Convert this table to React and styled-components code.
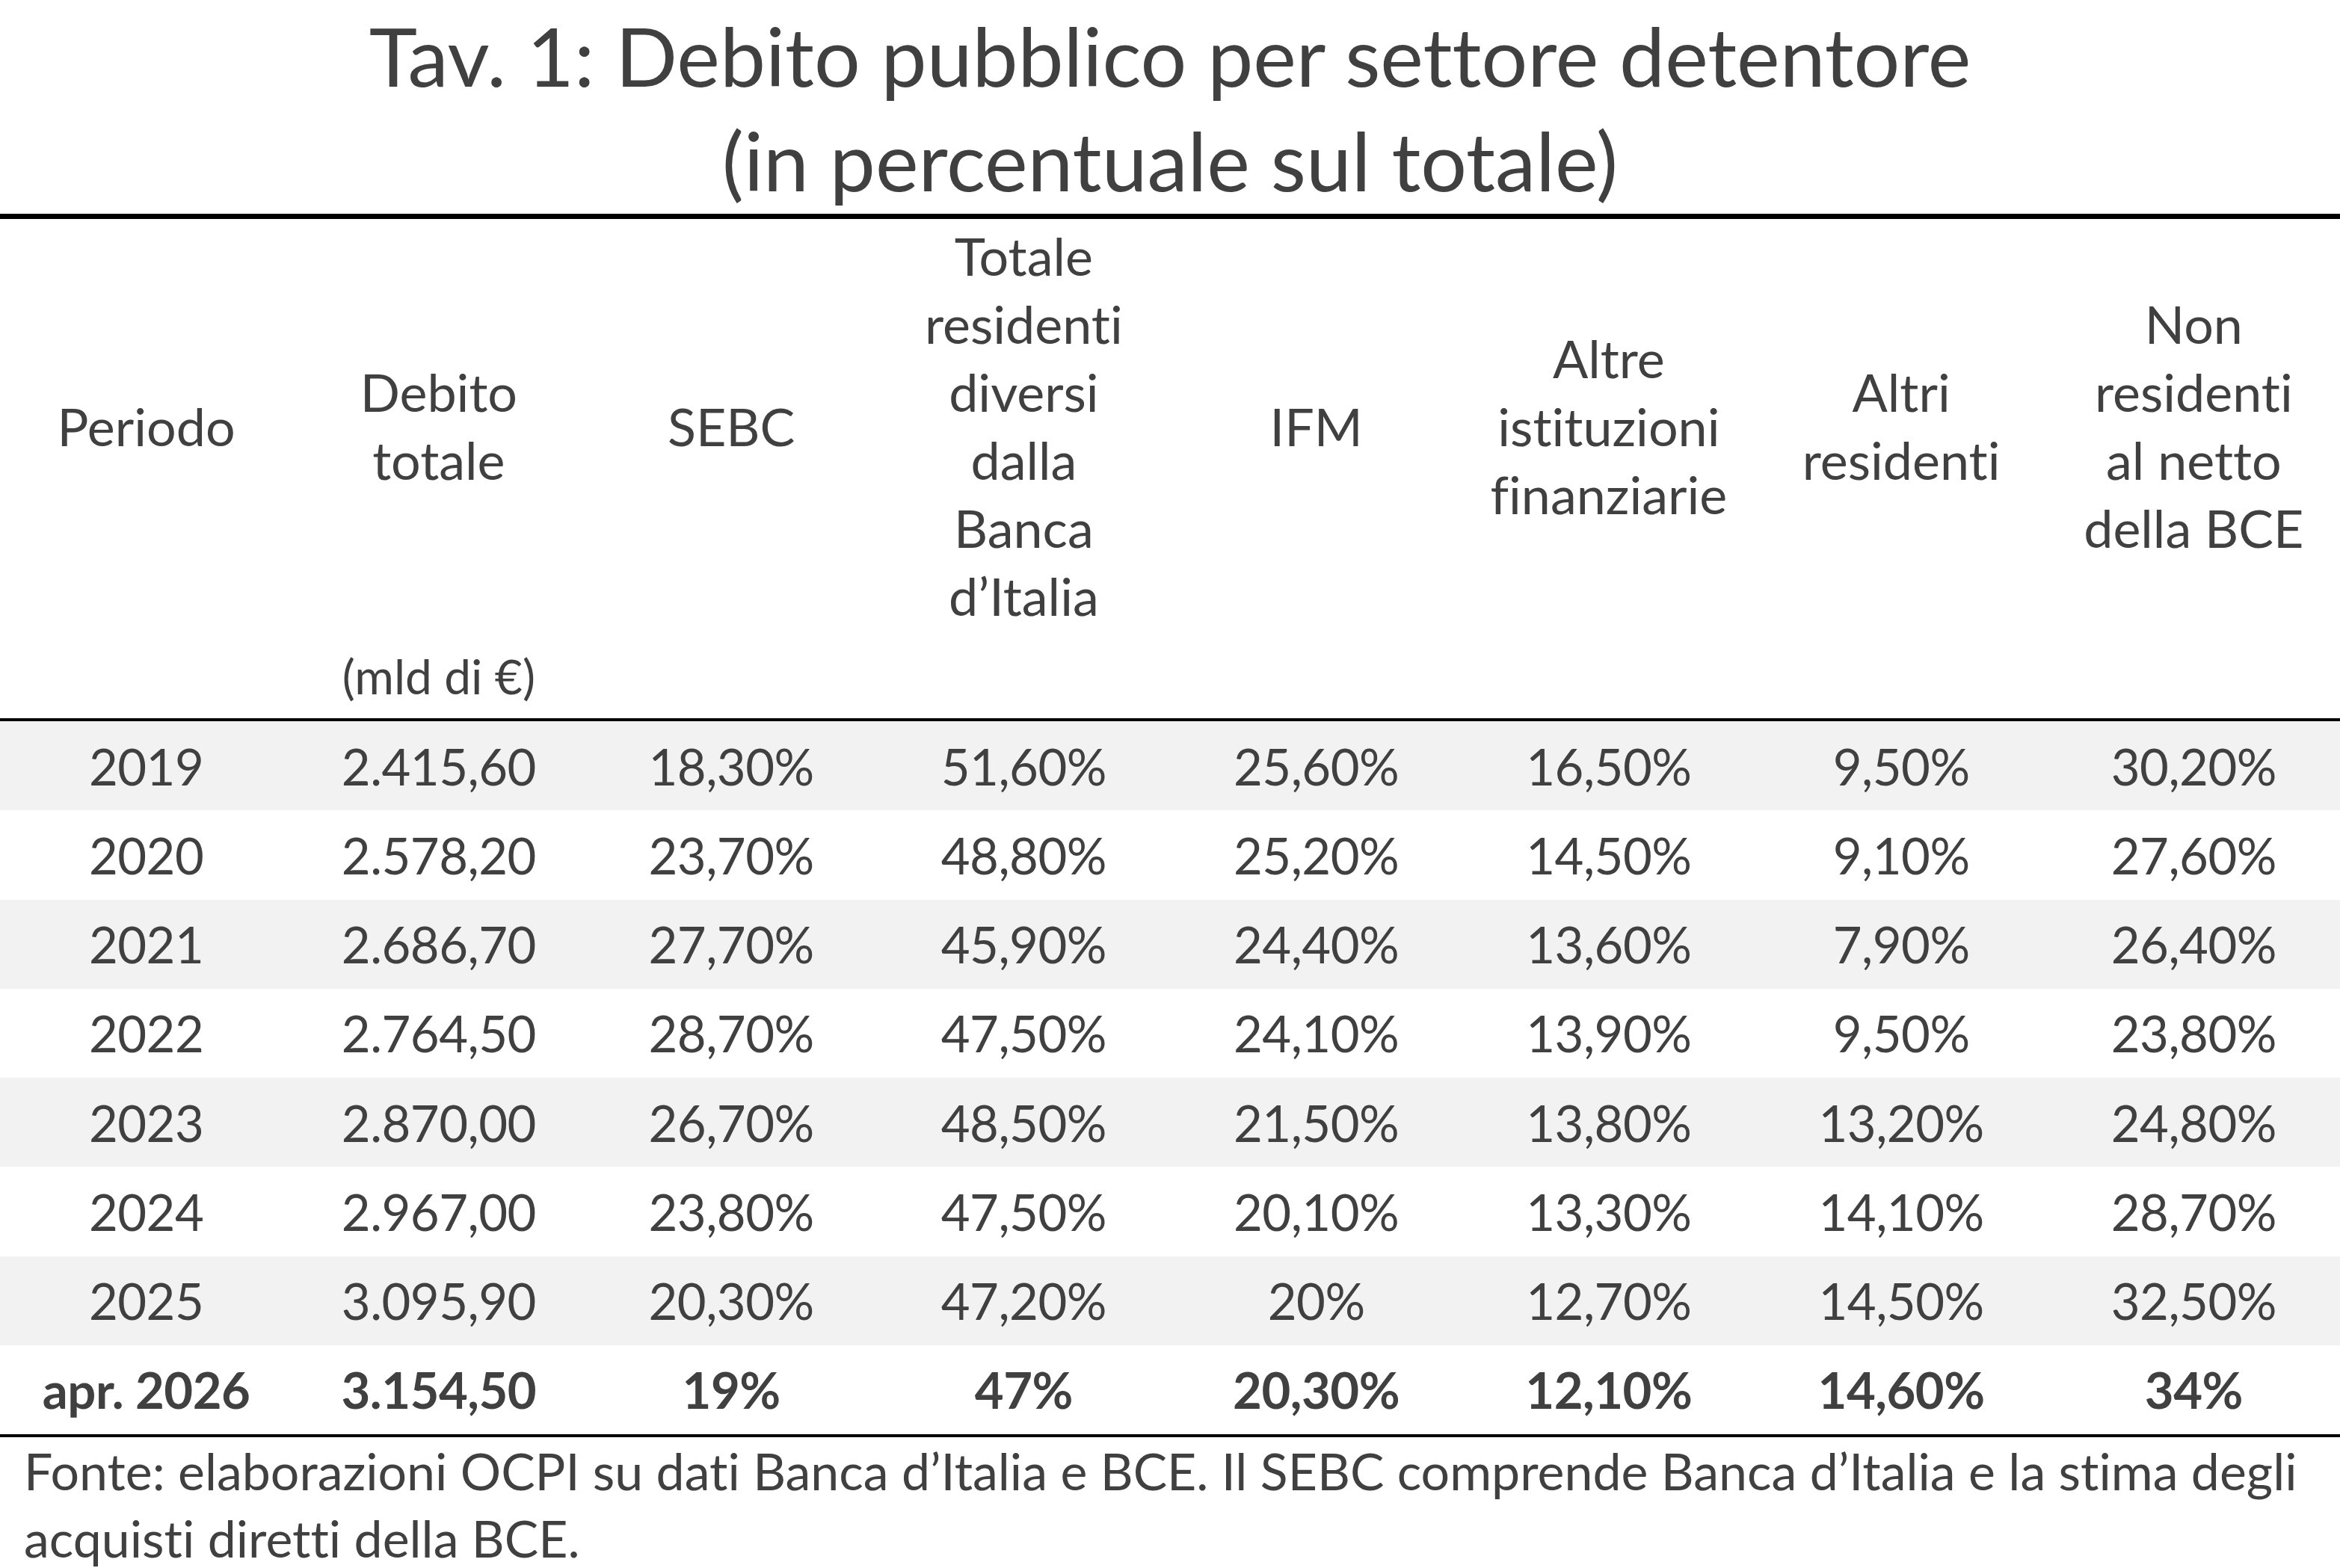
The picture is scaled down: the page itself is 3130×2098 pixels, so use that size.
import React from "react";
import styled, { createGlobalStyle } from "styled-components";

const Global = createGlobalStyle`
  html, body { margin: 0; padding: 0; background: #ffffff; }
  * { box-sizing: border-box; }
`;

const Page = styled.div`
  width: 3130px;
  background: #ffffff;
  color: #404040;
  font-family: Lato, "Open Sans", "Liberation Sans", sans-serif;
  font-variant-ligatures: none;
  font-feature-settings: "liga" 0, "clig" 0, "dlig" 0;
`;

const Title = styled.h1`
  margin: 0;
  height: 286px;
  padding-top: 4px;
  text-align: center;
  font-weight: 400;
  font-size: 109px;
  line-height: 140px;
`;

const Table = styled.section`
  border-top: 7px solid #000;
  border-bottom: 4px solid #000;
`;

const Head = styled.div`
  display: grid;
  grid-template-columns: repeat(8, 1fr);
  grid-template-rows: 554px 114px;
  border-bottom: 4px solid #000;
  font-size: 70px;
  line-height: 91px;
`;

const HeadCell = styled.div`
  display: flex;
  align-items: center;
  justify-content: center;
  text-align: center;
`;

const UnitCell = styled.div`
  display: flex;
  align-items: center;
  justify-content: center;
  font-size: 64px;
`;

const Row = styled.div`
  display: grid;
  grid-template-columns: repeat(8, 1fr);
  height: 119.25px;
  background: ${(p) => (p.$shaded ? "#f2f2f2" : "#ffffff")};
  font-weight: ${(p) => (p.$bold ? 700 : 400)};
  font-size: 67px;
  letter-spacing: -0.5px;
`;

const Cell = styled.div`
  display: flex;
  align-items: center;
  justify-content: center;
  white-space: nowrap;
`;

const Note = styled.p`
  margin: 0;
  padding: 0 20px 0 32px;
  font-size: 68px;
  line-height: 90px;
`;

const headers = [
  ["Periodo"],
  ["Debito", "totale"],
  ["SEBC"],
  ["Totale", "residenti", "diversi", "dalla", "Banca", "d\u2019Italia"],
  ["IFM"],
  ["Altre", "istituzioni", "finanziarie"],
  ["Altri", "residenti"],
  ["Non", "residenti", "al netto", "della BCE"],
];

const rows = [
  ["2019", "2.415,60", "18,30%", "51,60%", "25,60%", "16,50%", "9,50%", "30,20%"],
  ["2020", "2.578,20", "23,70%", "48,80%", "25,20%", "14,50%", "9,10%", "27,60%"],
  ["2021", "2.686,70", "27,70%", "45,90%", "24,40%", "13,60%", "7,90%", "26,40%"],
  ["2022", "2.764,50", "28,70%", "47,50%", "24,10%", "13,90%", "9,50%", "23,80%"],
  ["2023", "2.870,00", "26,70%", "48,50%", "21,50%", "13,80%", "13,20%", "24,80%"],
  ["2024", "2.967,00", "23,80%", "47,50%", "20,10%", "13,30%", "14,10%", "28,70%"],
  ["2025", "3.095,90", "20,30%", "47,20%", "20%", "12,70%", "14,50%", "32,50%"],
  ["apr. 2026", "3.154,50", "19%", "47%", "20,30%", "12,10%", "14,60%", "34%"],
];

export default function App() {
  return (
    <Page>
      <Global />
      <Title>
        Tav. 1: Debito pubblico per settore detentore
        <br />
        (in percentuale sul totale)
      </Title>
      <Table>
        <Head>
          {headers.map((lines, i) => (
            <HeadCell key={i}>
              <div>
                {lines.map((l, j) => (
                  <div key={j}>{l}</div>
                ))}
              </div>
            </HeadCell>
          ))}
          {headers.map((_, i) => (
            <UnitCell key={"u" + i}>{i === 1 ? "(mld di \u20ac)" : ""}</UnitCell>
          ))}
        </Head>
        {rows.map((r, i) => (
          <Row key={i} $shaded={i % 2 === 0 && i < 7} $bold={i === 7}>
            {r.map((v, j) => (
              <Cell key={j}>{v}</Cell>
            ))}
          </Row>
        ))}
      </Table>
      <Note>
        Fonte: elaborazioni OCPI su dati Banca d’Italia e BCE. Il SEBC comprende Banca d’Italia e la stima degli acquisti diretti della BCE.
      </Note>
    </Page>
  );
}
